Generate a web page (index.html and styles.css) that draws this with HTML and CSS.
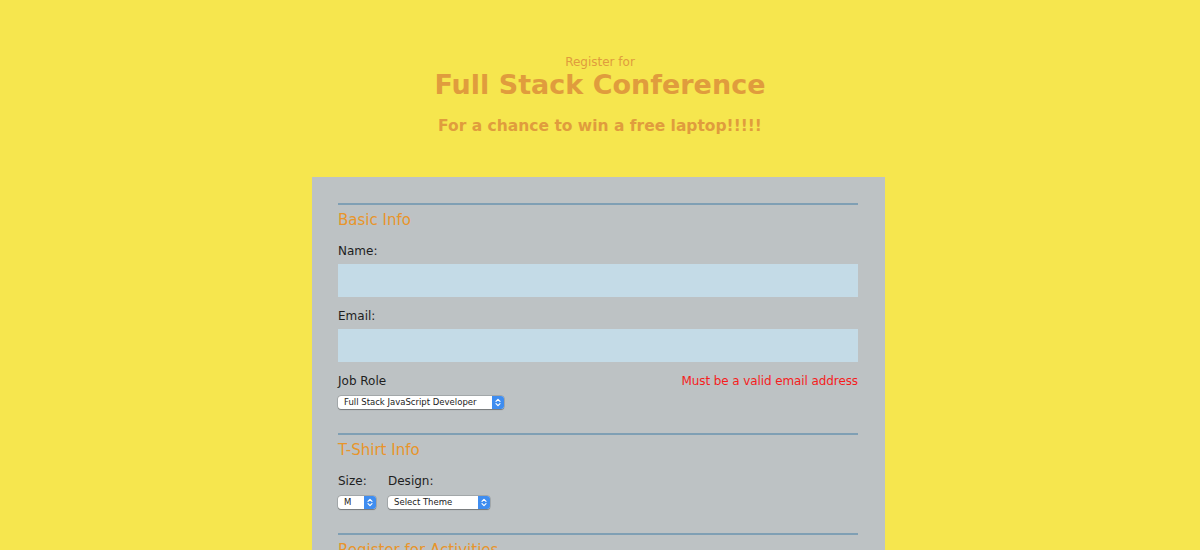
FILE: index.html
```html
<!DOCTYPE html>
<html>
<head>
<meta charset="utf-8">
<link rel="stylesheet" href="styles.css">
</head>
<body>
<header class="header">
  <p class="kicker">Register for</p>
  <h1 class="title">Full Stack Conference</h1>
  <h2 class="subtitle">For a chance to win a free laptop!!!!!</h2>
</header>
<main class="panel">
  <form class="form">
    <section class="section">
      <h3 class="heading">Basic Info</h3>
      <label class="label" for="name">Name:</label>
      <input class="input" id="name" type="text">
      <label class="label" for="mail">Email:</label>
      <input class="input" id="mail" type="email">
      <div class="row-between">
        <label class="label label-select" for="title">Job Role</label>
        <span class="error">Must be a valid email address</span>
      </div>
      <span class="select-wrap w-role">
        <select class="select" id="title"><option>Full Stack JavaScript Developer</option></select>
      </span>
    </section>
    <section class="section">
      <h3 class="heading">T-Shirt Info</h3>
      <div class="shirt">
        <div class="field">
          <label class="label label-select" for="size">Size:</label>
          <span class="select-wrap w-size">
            <select class="select" id="size"><option>M</option></select>
          </span>
        </div>
        <div class="field">
          <label class="label label-select" for="design">Design:</label>
          <span class="select-wrap w-design">
            <select class="select" id="design"><option>Select Theme</option></select>
          </span>
        </div>
      </div>
    </section>
    <section class="section">
      <h3 class="heading">Register for Activities</h3>
    </section>
  </form>
</main>
</body>
</html>
```

FILE: styles.css
```css
* { box-sizing: border-box; }
html, body { margin: 0; padding: 0; }
body {
  background: #f6e64e;
  font-family: "DejaVu Sans", Verdana, sans-serif;
  color: #1e1e1e;
  height: 550px;
  overflow: hidden;
}
.header {
  text-align: center;
  color: #e09c3d;
  padding-top: 55px;
}
.kicker {
  margin: 0;
  font-size: 12px;
  line-height: 14px;
}
.title {
  margin: 0;
  font-size: 27px;
  line-height: 32px;
  font-weight: 700;
}
.subtitle {
  margin: 15px 0 0;
  font-size: 15.5px;
  line-height: 20px;
  font-weight: 700;
}
.panel {
  width: 573px;
  margin: 41px 0 0 calc(50% - 288px);
  background: #bdc2c4;
  padding: 26px 27px 0 26px;
  height: 400px;
}
.form { margin: 0; }
.section {
  border-top: 2px solid #7f9fb4;
  padding-top: 6px;
  margin-bottom: 24px;
}
.heading {
  margin: 0 0 14px;
  color: #e8952b;
  font-size: 15px;
  line-height: 18px;
  font-weight: 400;
}
.label {
  display: block;
  font-size: 12px;
  line-height: 16px;
  margin: 0 0 5px;
}
.label-select { margin-bottom: 7px; }
.input {
  display: block;
  width: 100%;
  height: 33px;
  border: 0;
  background: #c4dbe7;
  margin: 0 0 11px;
  padding: 0 8px;
  font: inherit;
}
.row-between {
  display: flex;
  justify-content: space-between;
  align-items: flex-start;
}
.error {
  color: #f51d1d;
  font-size: 12px;
  line-height: 16px;
  letter-spacing: -0.1px;
}
.select-wrap {
  position: relative;
  display: block;
  height: 13px;
  background: #fff;
  border-radius: 3px;
  box-shadow: 0 0 0 0.5px rgba(0,0,0,0.22), 0 0.5px 1px rgba(0,0,0,0.3);
}
.select-wrap::after {
  content: "";
  position: absolute;
  right: 0;
  top: 0;
  width: 12px;
  height: 13px;
  border-radius: 0 3px 3px 0;
  background-color: #3f8df0;
  background-image: url("data:image/svg+xml;utf8,<svg xmlns='http://www.w3.org/2000/svg' width='12' height='13' viewBox='0 0 12 13'><path d='M4 5.3 L6 3.3 L8 5.3 M4 7.7 L6 9.7 L8 7.7' fill='none' stroke='white' stroke-width='1.2' stroke-linecap='round' stroke-linejoin='round'/></svg>");
  pointer-events: none;
}
.select {
  -webkit-appearance: none;
  appearance: none;
  display: block;
  width: 100%;
  height: 13px;
  border: 0;
  background: transparent;
  font-family: "DejaVu Sans", Verdana, sans-serif;
  font-size: 8.5px;
  line-height: 13px;
  padding: 0 0 0 6px;
  color: #222;
  outline: none;
}
.w-role { width: 166px; }
.w-size { width: 38px; }
.w-design { width: 102px; }
.shirt {
  display: flex;
  gap: 12px;
}
.field { display: flex; flex-direction: column; }
```
